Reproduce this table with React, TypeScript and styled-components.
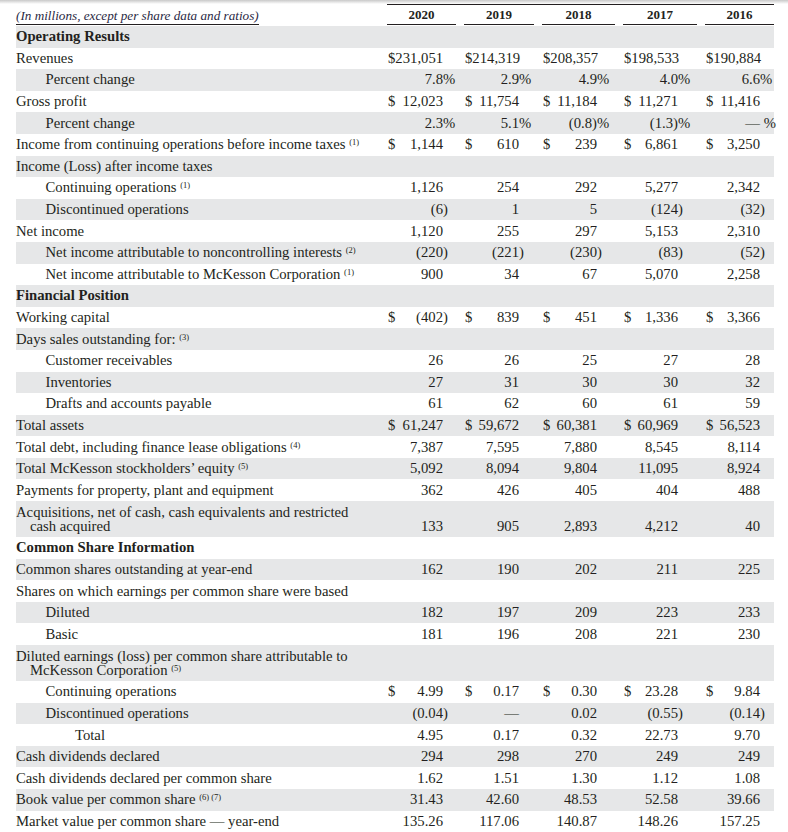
import React from "react";
import styled, { createGlobalStyle } from "styled-components";

const Global = createGlobalStyle`
  html, body { margin: 0; padding: 0; background: #ffffff; }
  body {
    font-family: "Liberation Serif", "Times New Roman", serif;
    color: #231f20;
  }
`;

const COLS = "363px 69px 70px 73px 74px 69px";
const PADS = [13, 15, 18, 19, 14];
const YEARS = ["2020", "2019", "2018", "2017", "2016"];

const Page = styled.div`
  width: 788px;
  height: 832px;
  overflow: hidden;
  background: #ffffff;
`;

const Shade = styled.div`
  height: 4px;
  background: linear-gradient(#c9c9c9, #ffffff);
`;

const Table = styled.div`
  width: 758px;
  margin-left: 16px;
`;

const Head = styled.div`
  display: grid;
  grid-template-columns: ${COLS};
  grid-template-rows: 1.4px 19.6px;
  column-gap: 8px;
  height: 22px;
`;

const TopRule = styled.div`
  grid-column: 2 / -1;
  grid-row: 1;
  background: #231f20;
`;

const Caption = styled.div`
  grid-column: 1;
  grid-row: 2;
  display: flex;
  align-items: flex-end;
`;

const CaptionText = styled.span`
  font-style: italic;
  font-size: 13.2px;
  line-height: 16px;
  color: #2a2944;
  border-bottom: 1.5px solid #231f20;
  white-space: nowrap;
`;

const YearCell = styled.div`
  grid-row: 2;
  display: flex;
  align-items: center;
  justify-content: center;
  font-weight: 700;
  font-size: 13px;
  border-bottom: 1.5px solid #231f20;
  padding-top: 1px;
`;

const Row = styled.div<{ $shade: boolean; $tall?: boolean }>`
  display: grid;
  grid-template-columns: ${COLS};
  column-gap: 8px;
  align-items: end;
  background: ${(p) => (p.$shade ? "#e6e7e8" : "transparent")};
  padding: ${(p) => (p.$tall ? "4px 0" : "4.3px 0")};
  font-size: 14.7px;
  line-height: ${(p) => (p.$tall ? "14px" : "13px")};
`;

const Label = styled.div<{ $indent: number; $bold?: boolean; $wrap?: boolean }>`
  padding-left: ${(p) => p.$indent * 29.5 + (p.$wrap ? 14 : 0)}px;
  text-indent: ${(p) => (p.$wrap ? -14 : 0)}px;
  font-weight: ${(p) => (p.$bold ? 700 : 400)};
  white-space: nowrap;
`;

const Sup = styled.sup`
  font-size: 8.5px;
  line-height: 0;
  vertical-align: 4.5px;
`;

const Cell = styled.div<{ $pad: number }>`
  display: flex;
  justify-content: space-between;
  padding: 0 ${(p) => p.$pad}px 0 1px;
  white-space: nowrap;
`;

const Num = styled.span`
  margin-left: auto;
`;

const Hang = styled.span<{ $w: number }>`
  margin-right: -${(p) => p.$w}em;
`;

type RowDef = {
  label: React.ReactNode;
  indent?: number;
  bold?: boolean;
  wrap?: boolean;
  sup?: string;
  values?: string[];
};

const rows: RowDef[] = [
  { label: "Operating Results", bold: true },
  { label: "Revenues", values: ["$231,051", "$214,319", "$208,357", "$198,533", "$190,884"] },
  { label: "Percent change", indent: 1, values: ["7.8%", "2.9%", "4.9%", "4.0%", "6.6%"] },
  { label: "Gross profit", values: ["$12,023", "$11,754", "$11,184", "$11,271", "$11,416"] },
  { label: "Percent change", indent: 1, values: ["2.3%", "5.1%", "(0.8)%", "(1.3)%", "— %"] },
  {
    label: "Income from continuing operations before income taxes",
    sup: "(1)",
    values: ["$1,144", "$610", "$239", "$6,861", "$3,250"],
  },
  { label: "Income (Loss) after income taxes" },
  { label: "Continuing operations", indent: 1, sup: "(1)", values: ["1,126", "254", "292", "5,277", "2,342"] },
  { label: "Discontinued operations", indent: 1, values: ["(6)", "1", "5", "(124)", "(32)"] },
  { label: "Net income", values: ["1,120", "255", "297", "5,153", "2,310"] },
  {
    label: "Net income attributable to noncontrolling interests",
    indent: 1,
    sup: "(2)",
    values: ["(220)", "(221)", "(230)", "(83)", "(52)"],
  },
  {
    label: "Net income attributable to McKesson Corporation",
    indent: 1,
    sup: "(1)",
    values: ["900", "34", "67", "5,070", "2,258"],
  },
  { label: "Financial Position", bold: true },
  { label: "Working capital", values: ["$(402)", "$839", "$451", "$1,336", "$3,366"] },
  { label: "Days sales outstanding for:", sup: "(3)" },
  { label: "Customer receivables", indent: 1, values: ["26", "26", "25", "27", "28"] },
  { label: "Inventories", indent: 1, values: ["27", "31", "30", "30", "32"] },
  { label: "Drafts and accounts payable", indent: 1, values: ["61", "62", "60", "61", "59"] },
  { label: "Total assets", values: ["$61,247", "$59,672", "$60,381", "$60,969", "$56,523"] },
  {
    label: "Total debt, including finance lease obligations",
    sup: "(4)",
    values: ["7,387", "7,595", "7,880", "8,545", "8,114"],
  },
  {
    label: "Total McKesson stockholders’ equity",
    sup: "(5)",
    values: ["5,092", "8,094", "9,804", "11,095", "8,924"],
  },
  { label: "Payments for property, plant and equipment", values: ["362", "426", "405", "404", "488"] },
  {
    label: (
      <>
        Acquisitions, net of cash, cash equivalents and restricted
        <br />
        cash acquired
      </>
    ),
    wrap: true,
    values: ["133", "905", "2,893", "4,212", "40"],
  },
  { label: "Common Share Information", bold: true },
  { label: "Common shares outstanding at year-end", values: ["162", "190", "202", "211", "225"] },
  { label: "Shares on which earnings per common share were based" },
  { label: "Diluted", indent: 1, values: ["182", "197", "209", "223", "233"] },
  { label: "Basic", indent: 1, values: ["181", "196", "208", "221", "230"] },
  {
    label: (
      <>
        Diluted earnings (loss) per common share attributable to
        <br />
        McKesson Corporation
      </>
    ),
    wrap: true,
    sup: "(5)",
  },
  { label: "Continuing operations", indent: 1, values: ["$4.99", "$0.17", "$0.30", "$23.28", "$9.84"] },
  { label: "Discontinued operations", indent: 1, values: ["(0.04)", "—", "0.02", "(0.55)", "(0.14)"] },
  { label: "Total", indent: 2, values: ["4.95", "0.17", "0.32", "22.73", "9.70"] },
  { label: "Cash dividends declared", values: ["294", "298", "270", "249", "249"] },
  { label: "Cash dividends declared per common share", values: ["1.62", "1.51", "1.30", "1.12", "1.08"] },
  { label: "Book value per common share", sup: "(6) (7)", values: ["31.43", "42.60", "48.53", "52.58", "39.66"] },
  {
    label: "Market value per common share — year-end",
    values: ["135.26", "117.06", "140.87", "148.26", "157.25"],
  },
];

function Value({ raw, pad }: { raw: string; pad: number }) {
  let s = raw;
  const dollar = s.startsWith("$");
  if (dollar) s = s.slice(1);
  let hang: string | null = null;
  let w = 0;
  if (s === "— %") {
    s = "—";
    hang = "\u00a0%";
    w = 1.083;
  } else if (s.endsWith("%")) {
    s = s.slice(0, -1);
    hang = "%";
    w = 0.833;
  } else if (s.endsWith(")")) {
    s = s.slice(0, -1);
    hang = ")";
    w = 0.333;
  }
  return (
    <Cell $pad={pad}>
      {dollar && <span>$</span>}
      <Num>{s}</Num>
      {hang && <Hang $w={w}>{hang}</Hang>}
    </Cell>
  );
}

export default function App() {
  return (
    <Page>
      <Global />
      <Shade />
      <Table>
        <Head>
          <TopRule />
          <Caption>
            <CaptionText>(In millions, except per share data and ratios)</CaptionText>
          </Caption>
          {YEARS.map((y) => (
            <YearCell key={y}>{y}</YearCell>
          ))}
        </Head>
        {rows.map((r, i) => (
          <Row key={i} $shade={i % 2 === 0} $tall={r.wrap}>
            <Label $indent={r.indent ?? 0} $bold={r.bold} $wrap={r.wrap}>
              {r.label}
              {r.sup && (
                <>
                  {" "}
                  <Sup>{r.sup}</Sup>
                </>
              )}
            </Label>
            {r.values &&
              r.values.map((v, j) => <Value key={j} raw={v} pad={PADS[j]} />)}
          </Row>
        ))}
      </Table>
    </Page>
  );
}
